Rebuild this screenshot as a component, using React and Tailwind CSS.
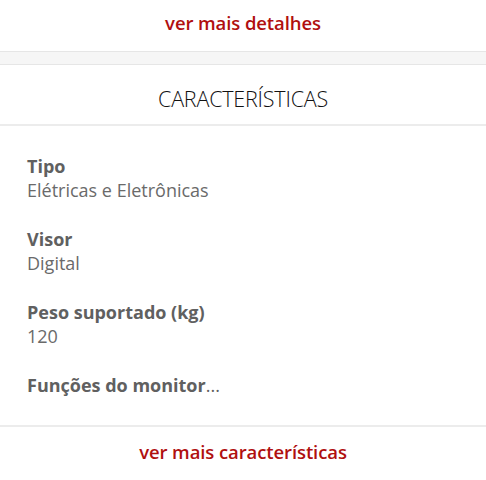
export default function App() {
  const specs = [
    { label: 'Tipo', value: 'Elétricas e Eletrônicas' },
    { label: 'Visor', value: 'Digital' },
    { label: 'Peso suportado (kg)', value: '120' },
  ];

  return (
    <div className="w-[486px] h-[480px] bg-white font-['Open_Sans',sans-serif] overflow-hidden">
      <div className="h-[51px] flex items-center justify-center pb-[6px]">
        <span className="text-[18.5px] font-semibold text-[#b00f0f] tracking-[-0.1px]">ver mais detalhes</span>
      </div>
      <div className="h-[14px] bg-[#f6f6f6] border-y border-[#e6e6e6]" />
      <div className="h-[61px] flex items-center justify-center border-b-2 border-[#ececec]">
        <h2 className="text-[21.5px] font-light text-[#111] tracking-[-0.2px] mt-[9px]">CARACTERÍSTICAS</h2>
      </div>
      <div className="px-[27px] pt-[28px] h-[299px]">
        {specs.map((s) => (
          <div key={s.label} className="mb-[25px] leading-[24px]">
            <div className="text-[18px] font-bold text-[#606060]">{s.label}</div>
            <div className="text-[18px] text-[#6a6a6a]">{s.value}</div>
          </div>
        ))}
        <div className="text-[18px] leading-[24px] font-bold text-[#606060]">
          Funções do monitor<span className="font-normal">...</span>
        </div>
      </div>
      <div className="border-t-2 border-[#ececec] h-[52px] flex items-center justify-center">
        <span className="text-[18.5px] font-semibold text-[#b00f0f] tracking-[-0.1px]">ver mais características</span>
      </div>
    </div>
  );
}
